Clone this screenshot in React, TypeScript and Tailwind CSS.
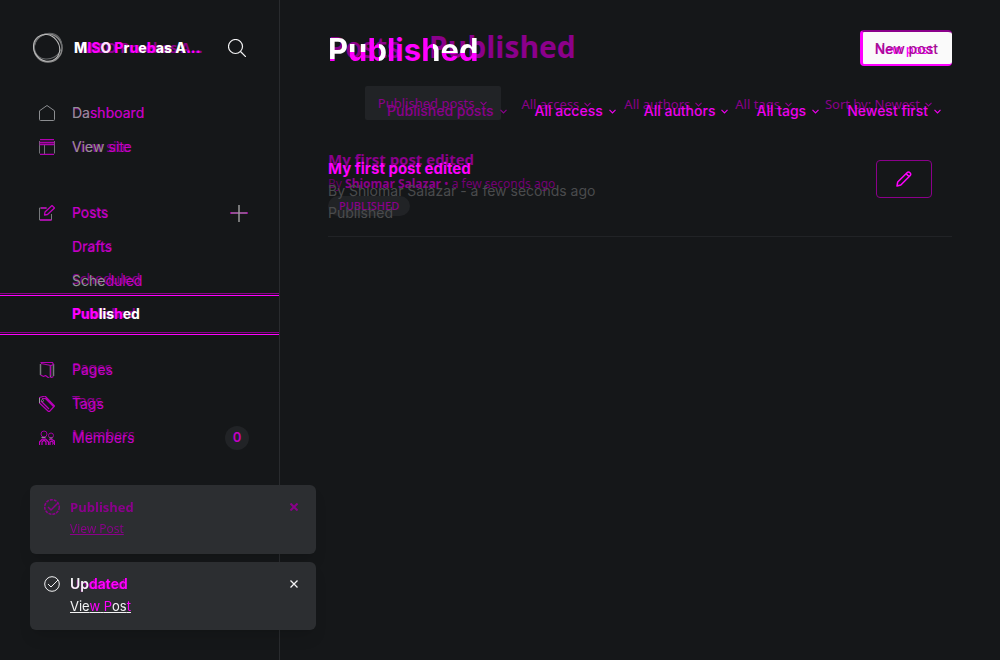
import type { ReactNode } from "react";

type LayeredProps = { before: ReactNode; after: ReactNode; className?: string };

// Stacks two revisions of a label in the same grid cell.
function Layered({ before, after, className = "" }: LayeredProps) {
  return (
    <span className={`inline-grid justify-items-start ${className}`}>
      <span aria-hidden="true" className="col-start-1 row-start-1 whitespace-nowrap">{before}</span>
      <span className="col-start-1 row-start-1 whitespace-nowrap">{after}</span>
    </span>
  );
}

function Icon({ children, className = "size-4" }: { children: ReactNode; className?: string }) {
  return (
    <svg viewBox="0 0 16 16" fill="none" stroke="currentColor" strokeWidth="1" strokeLinejoin="round" className={`shrink-0 ${className}`} aria-hidden="true">
      {children}
    </svg>
  );
}

const icons = {
  home: (
    <Icon>
      <path d="M.5 5.8 8 .5l7.5 5.3v8.7a1 1 0 0 1-1 1h-13a1 1 0 0 1-1-1z" stroke="#8c8e91" />
    </Icon>
  ),
  site: (
    <Icon>
      <path d="M.5 2v12.500M15.500 2v12.500M5.500 6v9" stroke="#707276" />
      <path d="M1 .5h14M.5 3.500h15M.5 5.500h15M1 15.500h14" stroke="#b000b0" strokeWidth="1.300" />
      <path d="M.5 7v7M15.500 7v7M5.500 7v7" stroke="#707276" />
    </Icon>
  ),
  posts: (
    <Icon>
      <path d="M8 3H.5v12h12V9" stroke="#77797c" />
      <path d="M1 15h11.500M2 3h5M6 7l7-6.500L15.500 3 8.500 9.500 5.500 10z" stroke="#c000c0" strokeWidth="1.300" />
    </Icon>
  ),
  pages: (
    <Icon>
      <path d="M1.500 2v11M11.500 3v12M14.500 2v12" stroke="#77797c" strokeWidth="1.500" />
      <path d="M1.500.5h12l1 2M2 1.500l10 2 2.500-1M1.500 13l3 1.500 2-1 4 3 4-2M11.500 3.500v10" stroke="#b000b0" strokeWidth="1.200" />
    </Icon>
  ),
  tags: (
    <Icon>
      <path d="M.5 1.500 6 0l9.500 10-5.500 6L.5 7zM3 2.500h3.500l8 8M2 5l8 8" stroke="#b900b9" strokeWidth="1.200" />
      <path d="M.5 2v5" stroke="#999b9e" />
      <circle cx="3.500" cy="4.500" r="1" stroke="#77797c" />
    </Icon>
  ),
  members: (
    <Icon>
      <path d="M.5 15v-3l3-3h3l3 3v3M10 10l2-1 3.500 2v4M3 15v-3l2-2 2 2v3M11 15v-3l1.500-1 1.500 1v3" stroke="#c000c0" strokeWidth="1.200" />
      <circle cx="5" cy="4" r="3" stroke="#a000a0" />
      <circle cx="12" cy="5.500" r="2.500" stroke="#a000a0" />
      <path d="M2.500 7.500h4M10.500 8h3" stroke="#8c8e91" />
    </Icon>
  ),
};

type NavRowProps = {
  label: string;
  lead?: string;
  icon?: ReactNode;
  shift?: string;
  tail?: ReactNode;
};

function NavRow({ label, lead = "", icon, shift = "-mt-px", tail }: NavRowProps) {
  return (
    <li className="flex h-[34px] items-center pr-8 pl-[39px]">
      <a href="#" className="flex grow items-center">
        <span className="flex w-[33px] items-center">{icon}</span>
        <Layered
          className="text-sm leading-5"
          before={<span className={`block font-['Noto_Sans'] text-[#8b008b] ${shift}`}>{label}</span>}
          after={
            <span className="text-[#c400c4]">
              <span className="text-[#929395]">{lead}</span>
              {label.slice(lead.length)}
            </span>
          }
        />
      </a>
      {tail}
    </li>
  );
}

function Chevron() {
  return (
    <svg viewBox="0 0 7 5" className="h-[5px] w-[7px] shrink-0" fill="none" stroke="currentColor" strokeWidth="1.200" aria-hidden="true">
      <path d="m.5.8 3 3 3-3" />
    </svg>
  );
}

function Toast({ title, lead = "", old }: { title: string; lead?: string; old?: boolean }) {
  return (
    <section className={`flex items-start gap-[10px] rounded-md bg-[#2c2e31] px-[14px] pt-3 shadow-lg ${old ? "h-[69px] text-[#8b008b]" : "h-[68px] text-[#f4f4f5]"}`}>
      <Icon className="mt-[2px] size-4">
        <circle cx="8" cy="8" r="7.300" strokeWidth={old ? "1.500" : "1"} strokeDasharray={old ? "3 1" : "none"} />
        <path d="m4 8 3 3 7-7" strokeWidth={old ? "1.500" : "1"} />
      </Icon>
      <div className="grow">
        {old ? (
          <h2 className="font-['Open_Sans'] text-[13px] leading-5 font-bold">{title}</h2>
        ) : (
          <h2 className="text-sm leading-5 font-semibold">
            <Layered
              before={<span className="font-['Open_Sans'] text-[13px] font-bold text-[#8b008b]">{title}</span>}
              after={<><span>{lead}</span><span className="text-[#ff00ff]">{title.slice(lead.length)}</span></>}
            />
          </h2>
        )}
        {old ? (
          <a href="#" className="mt-[2px] block w-fit font-['Open_Sans'] text-xs leading-5 font-medium underline">View Post</a>
        ) : (
          <a href="#" className="mt-[2px] block w-fit text-[13px] leading-5 underline">
            Vie<span className="text-[#ff00ff]">w</span> <span className="text-[#ff00ff]">P</span>os<span className="text-[#ff00ff]">t</span>
          </a>
        )}
      </div>
      <button type="button" aria-label="Close" className="mt-[6px] mr-1">
        <svg viewBox="0 0 8 8" className="size-2" stroke="currentColor" strokeWidth={old ? "2" : "1.300"} aria-hidden="true">
          <path d="m.5.5 7 7m0-7-7 7" />
        </svg>
      </button>
    </section>
  );
}

const oldFilters = ["All access", "All authors", "All tags", "Sort by: Newest"];
const newFilters = ["All access", "All authors", "All tags", "Newest first"];

export default function App() {
  return (
    <div className="flex min-h-screen bg-[#151719] font-['Inter',sans-serif]">
      <aside className="w-[280px] shrink-0 border-r border-[#292b2e]">
        <header className="flex h-24 items-center pr-[33px] pl-8">
          <svg viewBox="0 0 32 32" className="size-8 shrink-0" fill="none" stroke="#888" strokeWidth="1" aria-hidden="true">
            <circle cx="16" cy="16" r="14" strokeWidth="1.500" />
            <ellipse cx="17" cy="14.500" rx="14" ry="12.500" stroke="#66686a" transform="rotate(-30 16 16)" />
            <ellipse cx="15" cy="17" rx="14" ry="12.500" stroke="#bbb" transform="rotate(50 16 16)" />
          </svg>
          <h2 className="ml-[10px] grow text-sm leading-5">
            <Layered
              before={<span className="pl-[6px] font-['Open_Sans'] font-bold text-[#8b008b]">MISO Pruebas A...</span>}
              after={
                <span className="font-extrabold text-[#ff00ff]">
                  <span className="text-white">M</span>IS<span className="text-[#ffddff]">O</span>{" P"}
                  <span className="text-white">r</span>u<span className="text-white">e</span>b
                  <span className="text-white">as</span>{" "}<span className="text-white">A</span>...
                </span>
              }
            />
          </h2>
          <button type="button" aria-label="Search" className="text-[#f4f4f5]">
            <svg viewBox="0 0 18 18" className="size-[18px]" fill="none" stroke="currentColor" strokeWidth="1.200" aria-hidden="true">
              <circle cx="7.500" cy="7.500" r="7" />
              <path d="m12.500 12.500 5.500 5.500" />
            </svg>
          </button>
        </header>
        <nav aria-label="Main">
          <ul>
            <NavRow label="Dashboard" lead="Da" icon={icons.home} shift="mt-0" />
            <NavRow label="View site" lead="View" icon={icons.site} shift="mt-0" />
          </ul>
          <ul className="mt-8">
            <NavRow
              label="Posts"
              icon={icons.posts}
              tail={
                <button type="button" aria-label="New post" className="-mr-px">
                  <svg viewBox="0 0 18 18" className="size-[18px]" fill="none" aria-hidden="true">
                    <path d="M0 8.500h18M0 9.500h18" stroke="#8b008b" />
                    <path d="M9 1v17" stroke="#999" strokeWidth="1.500" />
                    <path d="M1 9h16" stroke="#999" />
                  </svg>
                </button>
              }
            />
            <NavRow label="Drafts" />
            <NavRow label="Scheduled" lead="Sche" shift="-mt-[2px]" />
            <li className="-mt-[5px] border-t border-b border-t-[#8b008b] border-b-[#ff00ff] py-px">
              <a href="#" aria-current="page" className="flex h-[38px] items-center border-t border-b border-t-[#ff00ff] border-b-[#8b008b] pl-[72px]">
                <Layered
                  className="text-sm leading-5"
                  before={<span className="-mt-px block font-['Open_Sans'] text-[13px] font-bold text-[#8b008b]">Published</span>}
                  after={<span className="font-bold text-[#ff00ff]">Pub<span className="text-white">lis</span>h<span className="text-white">ed</span></span>}
                />
              </a>
            </li>
          </ul>
          <ul className="mt-[18px]">
            <NavRow label="Pages" icon={icons.pages} shift="-mt-[2px]" />
            <NavRow label="Tags" icon={icons.tags} shift="-mt-[3px]" />
            <NavRow
              label="Members"
              icon={icons.members}
              shift="-mt-[3px]"
              tail={
                <span className="-mr-[2px] flex size-6 items-center justify-center rounded-full bg-[#212326] text-[13px] font-semibold text-[#c400c4]">
                  0
                </span>
              }
            />
          </ul>
        </nav>
      </aside>

      <main className="grow px-12 pt-[30px]">
        <header className="flex items-start justify-between">
          <h1 className="inline-grid">
            <span aria-hidden="true" className="col-start-1 row-start-1 -mt-px flex gap-[28px] font-['Open_Sans'] text-[30px] leading-9 font-bold text-[#8b008b]">
              <span className="text-[28px] font-semibold">Posts</span>
              <span>Published</span>
            </span>
            <span className="col-start-1 row-start-1 pt-[2px] text-[31px] leading-9 font-bold text-[#ff00ff]">
              <span className="bg-[linear-gradient(to_bottom,#fff_76%,#f0f_76%)] bg-clip-text text-transparent">P</span>
              <span className="bg-[linear-gradient(to_bottom,#fff_56%,#f0f_56%)] bg-clip-text text-transparent">u</span>
              <span className="bg-[linear-gradient(to_right,#f0f_60%,#fff_60%)] bg-clip-text text-transparent">b</span>
              <span className="bg-[linear-gradient(to_right,#fff_30%,#f0f_30%)] bg-clip-text text-transparent">l</span>
              is
              <span className="bg-[linear-gradient(to_right,#f0f_65%,#fff_65%)] bg-clip-text text-transparent">h</span>
              <span className="bg-[linear-gradient(to_bottom,#fff_60%,#f0f_60%)] bg-clip-text text-transparent">ed</span>
            </span>
          </h1>
          <button type="button" className="h-9 rounded-[4px] border-t-2 border-b-2 border-l-[3px] border-t-[#8b008b] border-b-[#ff00ff] border-l-[#ff00ff] bg-[#fafafa] pr-[14px] pl-3">
            <Layered
              className="text-sm leading-5"
              before={<span className="font-['Noto_Sans'] text-[13px] font-medium text-[#ff00ff]">New post</span>}
              after={<span className="font-medium text-[#a01090]">New post</span>}
            />
          </button>
        </header>

        <div className="mt-4 grid h-[36px] text-sm">
          <div aria-hidden="true" className="col-start-1 row-start-1 flex items-start justify-end gap-[33px] pt-[2px] pr-5 font-['Noto_Sans'] text-[13px] text-[#8b008b]">
            <span className="-mr-[13px] flex h-[34px] items-center gap-[6px] rounded-xs bg-[#212326] pr-[14px] pl-[13px]">Published posts <Chevron /></span>
            {oldFilters.map((label) => (
              <span key={label} className="flex h-[36px] items-center gap-[5px]">{label} <Chevron /></span>
            ))}
          </div>
          <div className="col-start-1 row-start-1 flex items-start justify-end gap-7 pt-[17px] pr-[11px] leading-5 font-medium text-[#ee00ee]">
            <button type="button" className="flex items-center gap-[6px] text-[#8b008b]">Published posts <Chevron /></button>
            {newFilters.map((label) => (
              <button type="button" key={label} className="flex items-center gap-[6px]">{label} <Chevron /></button>
            ))}
          </div>
        </div>

        <article className="mt-[29px] flex h-[88px] items-start justify-between border-b border-[#212326]">
          <div className="grid">
            <div aria-hidden="true" className="col-start-1 row-start-1 flex flex-col items-start font-['Noto_Sans'] text-[#8b008b]">
              <span className="font-['Open_Sans'] text-[15px] leading-5 font-bold">My first post edited</span>
              <span className="mt-[5px] text-xs leading-5"><span className="text-[#650065]">By </span><b>Shiomar Salazar</b> • <span className="text-[#740074]">a few seconds ago</span></span>
              <span className="mt-[2px] flex h-5 items-center rounded-full bg-[#212326] px-[11px] text-[11px] font-medium">PUBLISHED</span>
            </div>
            <div className="col-start-1 row-start-1 pt-[9px] text-[#4a4b4d]">
              <h2 className="text-[15px] leading-[22px] font-bold text-[#ff00ff]">My first post edited</h2>
              <p className="text-sm leading-[22px]">By Shiomar Salazar - a few seconds ago</p>
              <p className="text-sm leading-[22px]">Published</p>
            </div>
          </div>
          <button type="button" aria-label="Edit post" className="mt-[11px] mr-5 flex h-[38px] w-14 items-center justify-center rounded-sm border border-[#8b008b] text-[#ff00ff]">
            <svg viewBox="0 0 16 16" className="size-4" fill="none" stroke="currentColor" strokeWidth="1.500" strokeLinejoin="round" aria-hidden="true">
              <path d="m1 15 .7-4L11 1.700c1-1 2-.9 3 0s1 2 0 3L4.800 14zM10 2.600 13.300 5.800" />
            </svg>
          </button>
        </article>
      </main>

      <div className="fixed bottom-[30px] left-[30px] flex w-[286px] flex-col gap-2" role="status">
        <Toast title="Published" old />
        <Toast title="Updated" lead="Up" />
      </div>
    </div>
  );
}
